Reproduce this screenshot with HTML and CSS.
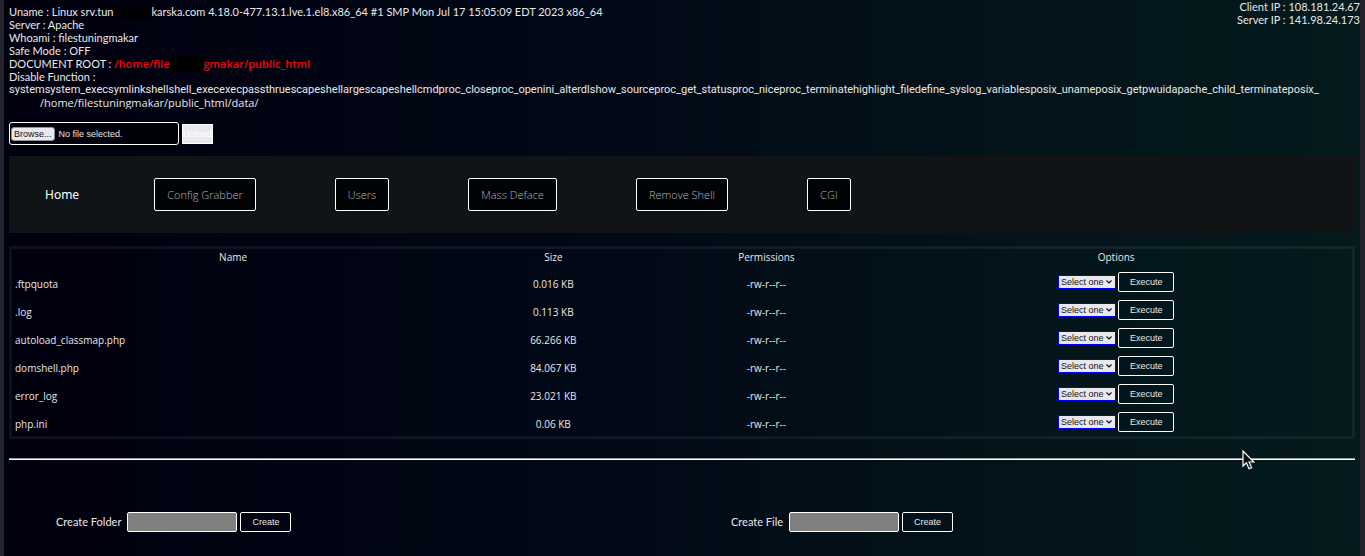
FILE: index.html
```html
<!DOCTYPE html>
<html lang="en">
<head>
<meta charset="utf-8">
<title>Server files</title>
<link rel="stylesheet" href="styles.css">
</head>
<body>
<header class="info">
  <div>Uname : Linux srv.tun<span class="mask"></span>karska.com 4.18.0-477.13.1.lve.1.el8.x86_64 #1 SMP Mon Jul 17 15:05:09 EDT 2023 x86_64</div>
  <div>Server : Apache</div>
  <div>Whoami : filestuningmakar</div>
  <div>Safe Mode : OFF</div>
  <div>DOCUMENT ROOT : <span class="root">/home/file<span class="masked">stunin</span>gmakar/public_html</span></div>
  <div>Disable Function :</div>
  <div class="functions">systemsystem_execsymlinkshellshell_execexecpassthruescapeshellargescapeshellcmdproc_closeproc_openini_alterdlshow_sourceproc_get_statusproc_niceproc_terminatehighlight_filedefine_syslog_variablesposix_unameposix_getpwuidapache_child_terminateposix_</div>
  <div class="cwd"><span class="path">Path</span>/home/filestuningmakar/public_html/data/</div>
</header>
<aside class="ips">
  <div>Client IP : 108.181.24.67</div>
  <div>Server IP : 141.98.24.173</div>
</aside>
<main>
  <form class="upload">
    <label class="file"><input type="file" class="file-input"><span class="browse">Browse...</span><span>No file selected.</span></label>
    <button type="button" class="upload-btn">Upload</button>
  </form>
  <nav class="menu">
    <a href="#" class="home">Home</a>
    <button type="button">Config Grabber</button>
    <button type="button">Users</button>
    <button type="button">Mass Deface</button>
    <button type="button">Remove Shell</button>
    <button type="button">CGI</button>
  </nav>
  <table class="files">
    <colgroup><col class="c-name"><col class="c-size"><col class="c-perm"><col class="c-opt"></colgroup>
    <thead><tr><th>Name</th><th>Size</th><th>Permissions</th><th>Options</th></tr></thead>
    <tbody>
      <tr><td>.ftpquota</td><td>0.016 KB</td><td>-rw-r--r--</td><td><div class="actions"><select aria-label="Action for .ftpquota"><option>Select one</option></select><button type="button" class="btn">Execute</button></div></td></tr>
      <tr><td>.log</td><td>0.113 KB</td><td>-rw-r--r--</td><td><div class="actions"><select aria-label="Action for .log"><option>Select one</option></select><button type="button" class="btn">Execute</button></div></td></tr>
      <tr><td>autoload_classmap.php</td><td>66.266 KB</td><td>-rw-r--r--</td><td><div class="actions"><select aria-label="Action for autoload_classmap.php"><option>Select one</option></select><button type="button" class="btn">Execute</button></div></td></tr>
      <tr><td>domshell.php</td><td>84.067 KB</td><td>-rw-r--r--</td><td><div class="actions"><select aria-label="Action for domshell.php"><option>Select one</option></select><button type="button" class="btn">Execute</button></div></td></tr>
      <tr><td>error_log</td><td>23.021 KB</td><td>-rw-r--r--</td><td><div class="actions"><select aria-label="Action for error_log"><option>Select one</option></select><button type="button" class="btn">Execute</button></div></td></tr>
      <tr><td>php.ini</td><td>0.06 KB</td><td>-rw-r--r--</td><td><div class="actions"><select aria-label="Action for php.ini"><option>Select one</option></select><button type="button" class="btn">Execute</button></div></td></tr>
    </tbody>
  </table>
  <hr>
  <div class="create">
    <form><label for="folder">Create Folder</label><input id="folder" type="text"><button type="button" class="btn">Create</button></form>
    <form><label for="file">Create File</label><input id="file" type="text"><button type="button" class="btn">Create</button></form>
  </div>
</main>
<svg class="cursor" viewBox="0 0 13 20" width="13" height="20" aria-hidden="true"><path d="M1 1v15l3.400-3.200 2.600 6 2.600-1.200-2.500-5.600h4.800z" fill="#111" stroke="#fff" stroke-width="1.200"/></svg>
</body>
</html>
```
FILE: styles.css
```css
* { box-sizing: border-box; }

body {
  margin: 0;
  min-height: 100vh;
  position: relative;
  padding: 5px 0 24px 5px;
  border-left: 4px solid #23252e;
  border-right: 5px solid #23232d;
  background: linear-gradient(90deg, #01000f, #010916 45%, #03141a 75%, #041a1d);
  color: #e8e8e8;
  font: 11px/13px Lato, sans-serif;
  overflow-x: hidden;
}

button, input, select {
  margin: 0;
  font: 9px/12px "Liberation Sans", sans-serif;
}

.info { overflow: hidden; white-space: nowrap; }
.ips { position: absolute; top: 0; right: 0; text-align: right; }
.functions { font-family: Roboto, sans-serif; }
.cwd { font-family: "Open Sans", sans-serif; }
.root { color: #f00404; font-family: "Open Sans", sans-serif; font-weight: 600; }
.mask {
  display: inline-block;
  width: 38px;
  height: 11px;
  vertical-align: -2px;
  background: #000;
}
.masked { color: #000; background: #000; }
.path { display: inline-block; width: 31px; color: #000; }

main { padding-right: 5px; }

.upload { display: flex; align-items: center; gap: 3px; margin-top: 13px; }
.file {
  display: flex;
  align-items: center;
  gap: 4px;
  width: 170px;
  height: 23px;
  padding: 0 1px;
  border: 1px solid #fff;
  border-radius: 3px;
  background: #00000a;
  font: 9px/12px "Liberation Sans", sans-serif;
}
.file-input { position: absolute; width: 1px; height: 1px; opacity: 0; }
.browse {
  padding: 0 2px;
  border: 1px solid #8f8f9d;
  border-radius: 3px;
  background: #e9e9ed;
  color: #111;
}
.upload-btn {
  height: 20px;
  padding: 0;
  border: 1px solid #fff;
  background: #e9e9ed;
  color: #fff;
}

.menu {
  display: flex;
  align-items: center;
  gap: 79px;
  height: 77px;
  margin-top: 11px;
  padding-left: 36px;
  background: #111416;
}
.home { margin-right: -4px; color: #fff; font: 12px/16px "Noto Sans", sans-serif; text-decoration: none; }
.menu button {
  height: 33px;
  padding: 0 12px;
  border: 1px solid #fff;
  border-radius: 2px;
  background: #000306;
  color: #b4b4b4;
  font: 300 11px/16px "Open Sans", sans-serif;
}

.files {
  width: 100%;
  margin-top: 13px;
  table-layout: fixed;
  border: 3px solid rgba(255, 255, 255, 0.06);
  border-spacing: 0;
  font: 10px/15px "Open Sans", sans-serif;
  text-align: center;
}
.c-name { width: 33%; }
.c-size { width: 14.8%; }
.c-perm { width: 17%; }
.c-opt { width: 35.2%; }
.files th { height: 19px; padding: 1px 0 0; font-weight: 400; vertical-align: top; }
.files td { height: 28px; padding: 4px 3px 0; }
.files td:first-child { text-align: left; }
.files td:last-child { padding: 0 3px; }
.actions { display: flex; justify-content: center; gap: 2px; align-items: center; }

select {
  width: 58px;
  height: 14px;
  padding: 0 0 0 2px;
  appearance: none;
  border: 1px solid #00f;
  background: #e9e9ed url("data:image/svg+xml,%3Csvg xmlns='http://www.w3.org/2000/svg' width='6' height='4'%3E%3Cpath d='M.5.5 3 3 5.500.5' fill='none' stroke='%23111' stroke-width='1.200'/%3E%3C/svg%3E") no-repeat right 3px center;
  color: #111;
}
.btn {
  height: 20px;
  padding: 0 11px;
  border: 1px solid #fff;
  border-radius: 2px;
  background: transparent;
  color: #e8e8e8;
}

hr { margin: 19px 0 0; height: 2px; border: 0; border-top: 1px solid #9a9a9a; background: #fff; }

.create { display: grid; grid-template-columns: 1fr 1fr; column-gap: 4px; margin-top: 52px; }
.create form { display: flex; align-items: center; gap: 3px; padding-left: 47px; }
.create label { padding: 0 3px 2px 0; }
.create input {
  width: 110px;
  height: 20px;
  border: 1px solid #fff;
  border-radius: 2px;
  background: #808080;
}

.cursor { position: absolute; left: 1238px; top: 450px; }
```
